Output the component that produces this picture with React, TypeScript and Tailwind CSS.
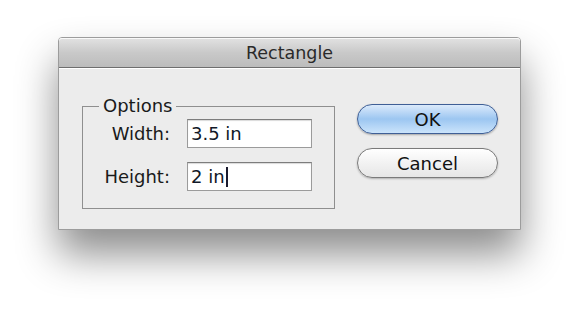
import React from "react";

const font = { fontFamily: '"DejaVu Sans", "Liberation Sans", sans-serif' };

const Field: React.FC<{ label: string; value: string; caret?: boolean }> = ({ label, value, caret }) => (
  <div className="flex items-center">
    <span className="w-[104px] pr-[17px] text-right text-[18px] text-[#1a1a1a]">{label}</span>
    <div className="flex h-[29px] w-[125px] items-center border border-[#9b9b9b] border-t-[#7d7d7d] bg-white pl-[3px] text-[18px] text-[#111827] shadow-[inset_0_1px_1px_rgba(0,0,0,0.15)]">
      <span>{value}</span>
      {caret && <span className="ml-px inline-block h-[20px] w-[2px] bg-[#1a1a2e]" />}
    </div>
  </div>
);

export default function App() {
  return (
    <div className="h-[312px] w-[580px] bg-white pl-[58px] pt-[37px]" style={font}>
      {/* dialog */}
      <div className="flex h-[193px] w-[463px] flex-col rounded-t-[4px] border border-[#9c9c9c] bg-[#ececec] shadow-[0_24px_40px_rgba(0,0,0,0.45)]">
        {/* title bar */}
        <div className="flex h-[30px] items-center justify-center rounded-t-[3px] border-b border-[#6e6e6e] bg-gradient-to-b from-[#e2e2e2] via-[#c9c9c9] to-[#bcbcbc] pt-px text-[17.5px] text-[#2a2a2a] shadow-[inset_0_1px_0_rgba(255,255,255,0.8)]">
          Rectangle
        </div>
        <div className="flex border-t border-white pl-[23px] pt-[26px]">
          <fieldset className="w-[253px] border border-[#8f8f8f] pb-[17px] pt-[2px]">
            <legend className="ml-[16px] px-[4px] text-[18px] leading-[22px] text-[#1a1a1a]">Options</legend>
            <div className="flex flex-col gap-[14px]">
              <Field label="Width:" value="3.5 in" />
              <Field label="Height:" value="2 in" caret />
            </div>
          </fieldset>
          <div className="ml-[22px] flex flex-col gap-[14px] pt-[9px]">
            <button className="h-[30px] w-[141px] rounded-full border border-[#3f5f96] bg-gradient-to-b from-[#dbeafb] via-[#9cc6f1] to-[#cbe4fb] text-[18px] text-[#111] shadow-[0_1px_2px_rgba(0,0,0,0.3)]">
              OK
            </button>
            <button className="h-[30px] w-[141px] rounded-full border border-[#7a7a7a] bg-gradient-to-b from-white via-[#f2f2f2] to-[#e6e6e6] text-[18px] text-[#111] shadow-[0_1px_2px_rgba(0,0,0,0.25)]">
              Cancel
            </button>
          </div>
        </div>
      </div>
    </div>
  );
}
